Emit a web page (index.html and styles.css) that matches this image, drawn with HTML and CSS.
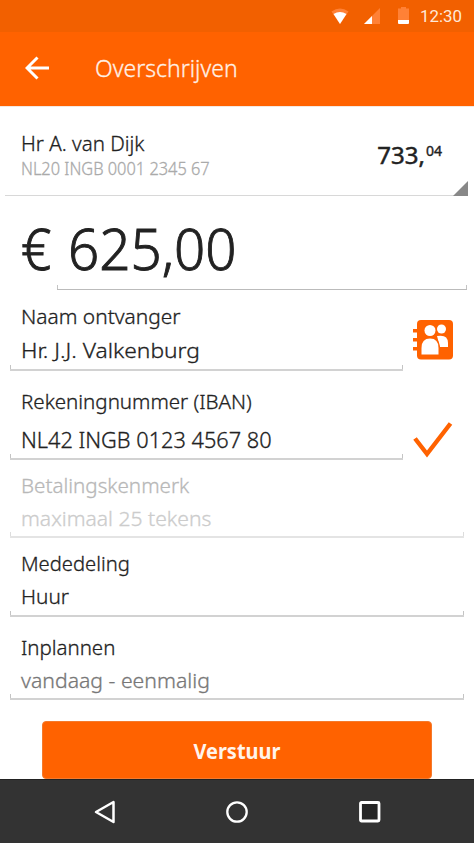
FILE: index.html
```
<!DOCTYPE html>
<html lang="nl">
<head>
<meta charset="utf-8">
<title>Overschrijven</title>
<link rel="stylesheet" href="styles.css">
</head>
<body>
<div class="status">
  <svg width="18" height="18" viewBox="0 0 18 18"><path d="M0.500 3.400Q9-2.600 17.500 3.400L9 16z" fill="#ff8136"/><path d="M2.500 6Q9 2 15.500 6L9 16z" fill="#fff"/></svg>
  <svg class="signal" width="17" height="17" viewBox="0 0 17 17"><path d="M16 0v16H0z" fill="#ff8136"/><path d="M8 8v8H0z" fill="#fff"/></svg>
  <svg class="battery" width="12" height="18" viewBox="0 0 12 18"><path d="M3 0h5v1.500h3V13H0V1.500h3z" fill="#ff8136"/><path d="M0 13h11v3q0 1-1 1H1q-1 0-1-1z" fill="#fff"/></svg>
  <span class="clock">12:30</span>
</div>
<header class="appbar">
  <svg width="25" height="24" viewBox="0 0 25 24"><path d="M12.500 1.500L2 12l10.500 10.500M2.500 12H24" fill="none" stroke="#fff" stroke-width="3"/></svg>
  <h1>Overschrijven</h1>
</header>
<main>
  <section class="account">
    <div>
      <div class="holder"><span class="t">Hr A. van Dijk</span></div>
      <div class="number"><span class="t">NL20 INGB 0001 2345 67</span></div>
    </div>
    <div class="balance"><span>733,</span><span class="cents">04</span></div>
    <i class="corner"></i>
  </section>
  <section class="amount"><span class="euro">€</span><div class="sum"><span class="t">625,00</span></div></section>
  <section class="field name short"><label><span class="t">Naam ontvanger</span></label><p><span class="t">Hr. J.J. Valkenburg</span></p>
    <svg class="book" width="40" height="40" viewBox="0 0 40 40"><rect x="4" y="0" width="36" height="39.500" rx="4" fill="#ff6200"/><path d="M0 9h5v3.500H0zM0 18h5v3.500H0zM0 27h5v3.500H0z" fill="#ff6200"/><circle cx="28.500" cy="9" r="4.500" fill="#fff"/><path d="M24 16q11-2 11 7v4h-8z" fill="#fff"/><circle cx="17" cy="10.500" r="7" fill="#ff6200"/><path d="M7.500 35V28q0-11 9.500-11t10 11v7z" fill="#ff6200"/><circle cx="17" cy="10.500" r="5.500" fill="#fff"/><path d="M8.500 34.500V28q0-9.500 8.500-9.500t8.500 9.500v6.500z" fill="#fff"/></svg>
  </section>
  <section class="field iban short"><label><span class="t">Rekeningnummer (IBAN)</span></label><p><span class="t">NL42 INGB 0123 4567 80</span></p>
    <svg class="check" width="40" height="36" viewBox="0 0 40 36"><path d="M2 16.500L14 32 37.500 1.500" fill="none" stroke="#ff6200" stroke-width="4.400"/></svg>
  </section>
  <section class="field ref"><label><span class="t">Betalingskenmerk</span></label><p><span class="t">maximaal 25 tekens</span></p></section>
  <section class="field memo"><label><span class="t">Mededeling</span></label><p><span class="t">Huur</span></p></section>
  <section class="field plan"><label><span class="t">Inplannen</span></label><p><span class="t">vandaag - eenmalig</span></p></section>
  <button><span>Verstuur</span></button>
</main>
<nav>
  <svg width="22" height="24" viewBox="0 0 22 24"><path d="M19.500 2v20L2 12z" fill="none" stroke="#fff" stroke-width="2.500" stroke-linejoin="round"/></svg>
  <svg width="24" height="24" viewBox="0 0 24 24"><circle cx="12" cy="12" r="9.700" fill="none" stroke="#fff" stroke-width="2.300"/></svg>
  <svg width="24" height="24" viewBox="0 0 24 24"><rect x="2.500" y="2.500" width="18.500" height="18.500" rx="1" fill="#262626" stroke="#fff" stroke-width="2.800"/></svg>
</nav>
</body>
</html>
```
FILE: styles.css
```
* { box-sizing: border-box; margin: 0; padding: 0; }
body {
  width: 474px; height: 843px; overflow: hidden;
  display: flex; flex-direction: column;
  background: #fff; color: #222;
  font-family: "Noto Sans", "Open Sans", sans-serif;
  font-weight: 300;
}
svg { display: block; flex: none; }
span { display: inline-block; white-space: nowrap; transform-origin: 0 50%; }
.t { transform: scaleX(var(--sx, 1)); -webkit-text-stroke: .3px currentColor; }

.status { height: 32px; flex: none; background: #f26000; display: flex; align-items: flex-start; padding: 8px 0 0 331px; }
.signal { margin-left: 15px; }
.battery { margin: -1px 0 0 17px; }
.clock { margin: -2px 0 0 10px; font: 400 17px/20px Roboto, sans-serif; color: #ffe8d8; transform: scaleX(.99); }

.appbar { height: 74px; flex: none; background: #ff6200; display: flex; align-items: center; padding: 0 0 2px 25px; }
h1 { margin-left: 45px; font-size: 23px; line-height: 32px; font-weight: 300; color: #fff0e6; -webkit-text-stroke: .3px #fff0e6; }

main { height: 673px; flex: none; border-top: 1px solid #f4e8e0; }
.account { position: relative; margin: 0 6px 0 5px; height: 89px; padding: 22px 0 0 16px; display: flex; justify-content: space-between; border-bottom: 1px solid #d8d8d8; }
.holder { font-size: 20.5px; line-height: 28px; --sx: 1; }
.number { font-size: 17.5px; line-height: 23px; color: #aaa; --sx: .935; }
.balance { margin: 11px 26px 0 0; display: flex; font-weight: 400; font-size: 24px; line-height: 30px; -webkit-text-stroke: .5px #222; }
.cents { margin-left: 1px; font-size: 14px; line-height: 22px; -webkit-text-stroke: .4px #222; }
.corner { position: absolute; right: 0; bottom: -1px; width: 15px; height: 15px; background: #888; clip-path: polygon(100% 0, 100% 100%, 0 100%); }

.amount { height: 94px; display: flex; padding: 18px 7px 0 21px; font-size: 57px; line-height: 68px; color: #222; -webkit-text-stroke: .9px #222; }
.amount .t { -webkit-text-stroke: .9px #222; --sx: .96; }
.euro { width: 36px; transform: scaleX(.93); }
.sum { position: relative; flex: 1; padding-left: 11px; border-bottom: 1px solid #bbb; }

.field { position: relative; margin: 0 10px; padding-left: 11px; border-bottom: 2px solid #d2d2d2; font-size: 20px; line-height: 33px; }
.field label, .field p { display: block; height: 34px; }
.short { margin-right: 71px; }
.field::after, .sum::after { content: ""; position: absolute; left: 0; right: 0; bottom: 0; height: 4px; border: solid #c4c4c4; border-width: 0 1px; }
.name { height: 71px; margin-top: 10px; }
.name label { --sx: 1.046; }
.name p { font-size: 20.5px; --sx: 1.11; }
.iban { height: 75px; margin-top: 14px; }
.iban label { --sx: 1.026; }
.iban p { font-size: 21px; line-height: 42px; --sx: 1.035; }
.ref { height: 69px; margin-top: 9px; color: #b8b8b8; border-color: #e4e4e4; }
.ref::after { border-color: #ddd; }
.ref label { --sx: 1.03; }
.ref p { color: #ccc; line-height: 32px; --sx: 1.054; }
.memo { height: 70px; margin-top: 9px; }
.memo label { --sx: 1.01; }
.memo p { line-height: 32px; --sx: 1.04; }
.plan { height: 69px; margin-top: 14px; }
.plan label { --sx: 1.022; }
.plan p { color: #777; line-height: 32px; --sx: 1.06; }
.book { position: absolute; left: 403px; top: 20px; }
.check { position: absolute; left: 403px; top: 37px; }

button { display: block; width: 390px; height: 58px; margin: 21px 0 0 42px; border: 1px solid #f47a2c; border-radius: 4px; background: #ff6200; color: #fff4ec; font: 700 22px/54px "Noto Sans", sans-serif; }
button span { transform-origin: 50% 50%; transform: scaleX(.908); }

nav { flex: 1; background: #333; border-top: 1px solid #222; display: grid; grid-template-columns: 1fr 110px 1fr; align-items: center; }
nav svg { justify-self: center; }
nav svg:first-child { justify-self: end; margin-right: 66px; }
nav svg:last-child { justify-self: start; margin-left: 66px; }
```
